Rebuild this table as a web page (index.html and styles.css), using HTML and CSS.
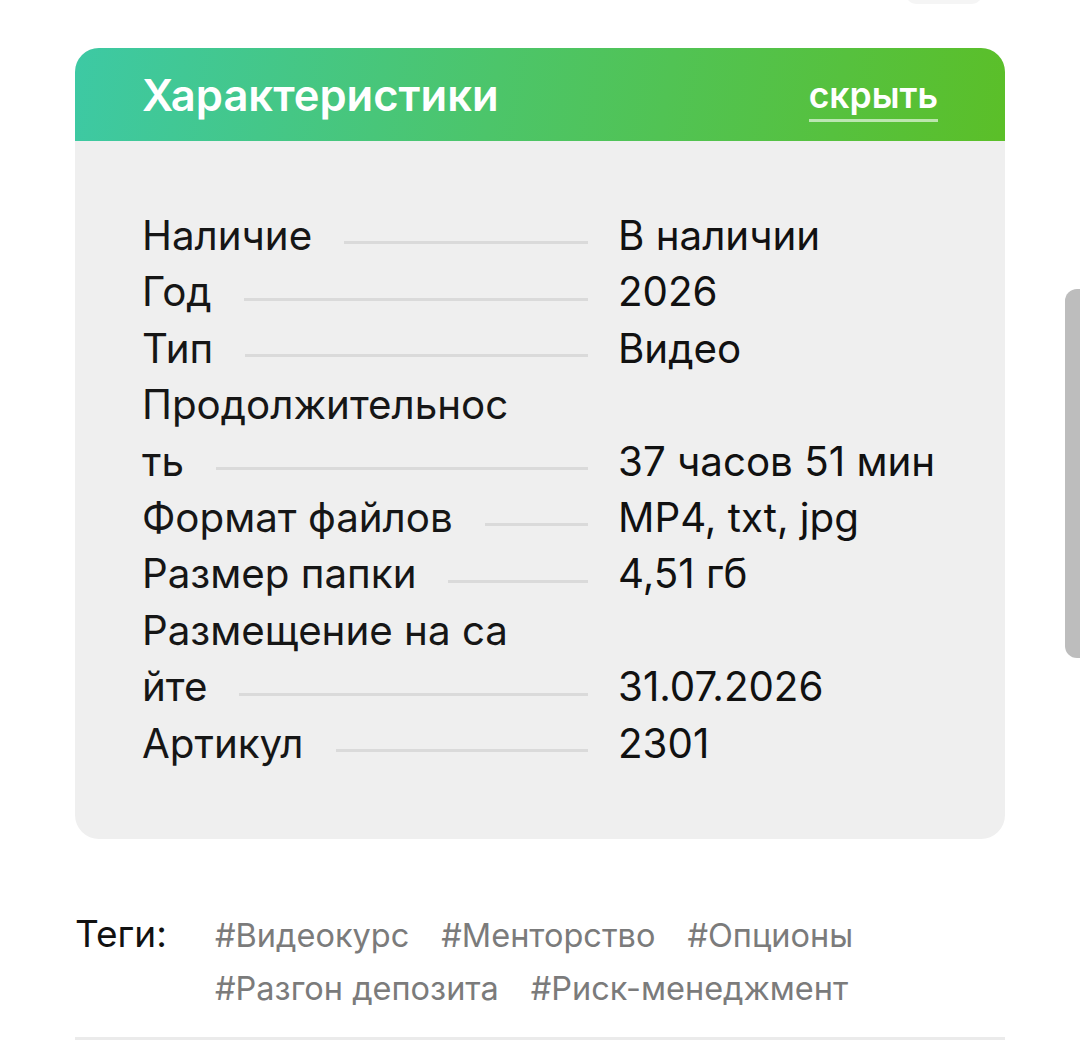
FILE: index.html
```html
<!DOCTYPE html>
<html lang="ru">
<head>
<meta charset="utf-8">
<link rel="stylesheet" href="styles.css">
</head>
<body>
<div class="topshape"></div>
<main class="page">
  <section class="card">
    <header class="card-head">
      <h2 class="card-title">Характеристики</h2>
      <a class="toggle">скрыть</a>
    </header>
    <div class="card-body">
      <div class="row"><div class="label"><span class="name">Наличие</span></div><div class="value">В наличии</div></div>
      <div class="row"><div class="label"><span class="name">Год</span></div><div class="value">2026</div></div>
      <div class="row"><div class="label"><span class="name">Тип</span></div><div class="value">Видео</div></div>
      <div class="row"><div class="label"><span class="name">Продолжительность</span></div><div class="value">37 часов 51 мин</div></div>
      <div class="row"><div class="label"><span class="name">Формат файлов</span></div><div class="value">MP4, txt, jpg</div></div>
      <div class="row"><div class="label"><span class="name">Размер папки</span></div><div class="value">4,51 гб</div></div>
      <div class="row"><div class="label"><span class="name">Размещение на сайте</span></div><div class="value">31.07.2026</div></div>
      <div class="row"><div class="label"><span class="name">Артикул</span></div><div class="value">2301</div></div>
    </div>
  </section>
  <section class="tags">
    <div class="tags-label">Теги:</div>
    <div class="tags-list">
      <a class="tag">#Видеокурс</a>
      <a class="tag">#Менторство</a>
      <a class="tag">#Опционы</a>
      <a class="tag">#Разгон депозита</a>
      <a class="tag">#Риск-менеджмент</a>
    </div>
  </section>
  <div class="divider"></div>
</main>
<div class="scrollbar"></div>
</body>
</html>
```
FILE: styles.css
```css
html, body {
  margin: 0;
  padding: 0;
  background: #ffffff;
  height: 100%;
  overflow: hidden;
}
body {
  font-family: Inter, "Noto Sans", sans-serif;
  color: #151515;
  position: relative;
}
.page {
  width: 930px;
  margin: 0 0 0 75px;
  padding-top: 48px;
}
.card {
  border-radius: 24px;
  overflow: hidden;
  background: #efefef;
}
.card-head {
  height: 93px;
  display: flex;
  align-items: center;
  justify-content: space-between;
  padding: 0 67px;
  background: linear-gradient(100deg, #3dc9a4 0%, #4cc56a 45%, #5bbf28 100%);
}
.card-title {
  margin: 0;
  font-size: 43.5px;
  font-weight: 600;
  color: #ffffff;
}
.toggle {
  font-size: 35.5px;
  font-weight: 600;
  color: #ffffff;
  border-bottom: 3px solid rgba(255,255,255,0.6);
  line-height: 40px;
  padding-bottom: 3px;
  margin-top: 8px;
}
.card-body {
  padding: 67px 67px;
  font-size: 40.3px;
  line-height: 56.4px;
}
.row {
  display: flex;
  align-items: flex-end;
}
.label {
  position: relative;
  width: 446px;
  box-sizing: border-box;
  padding-right: 70px;
  flex: none;
  word-break: break-all;
}
.label::after {
  content: "";
  position: absolute;
  left: 0;
  right: 0;
  bottom: 20px;
  height: 3px;
  background: #dadada;
}
.name {
  position: relative;
  z-index: 1;
  background: #efefef;
  padding-right: 32px;
  color: #161616;
}
.value {
  margin-left: 30px;
  color: #111111;
}
.tags {
  display: flex;
  align-items: baseline;
  margin-top: 68px;
  line-height: 53px;
}
.tags-label {
  width: 140px;
  flex: none;
  font-size: 37px;
  color: #111111;
}
.tags-list {
  display: flex;
  flex-wrap: wrap;
  column-gap: 32px;
  font-size: 32.5px;
}
.tag {
  color: #7b7b7b;
}
.divider {
  height: 3px;
  background: #ebebeb;
  margin-top: 22px;
}
.scrollbar {
  position: absolute;
  right: 0;
  top: 289px;
  width: 15px;
  height: 369px;
  background: #bdbdbd;
  border-radius: 12px 0 0 12px;
}
.topshape {
  position: absolute;
  left: 905px;
  top: -20px;
  width: 78px;
  height: 24px;
  background: #f5f5f5;
  border-radius: 12px;
}
```
